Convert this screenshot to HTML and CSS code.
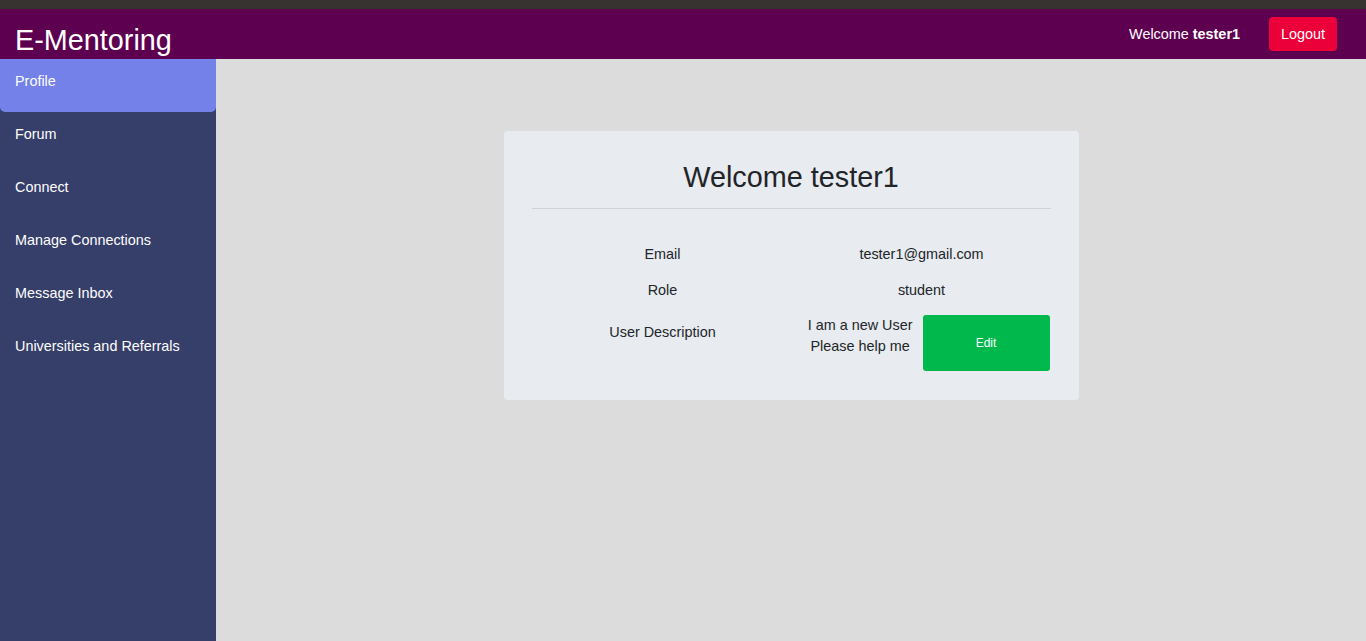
FILE: index.html
```html
<!DOCTYPE html>
<html lang="en">
<head>
<meta charset="utf-8">
<title>E-Mentoring</title>
<link rel="stylesheet" href="styles.css">
</head>
<body>
<div class="topstrip"></div>
<header class="header">
  <div class="brand">E-Mentoring</div>
  <div class="header-right">
    <span class="welcome">Welcome <b>tester1</b></span>
    <button class="logout">Logout</button>
  </div>
</header>
<div class="layout">
  <nav class="sidebar">
    <a class="nav-item active">Profile</a>
    <a class="nav-item">Forum</a>
    <a class="nav-item">Connect</a>
    <a class="nav-item">Manage Connections</a>
    <a class="nav-item">Message Inbox</a>
    <a class="nav-item">Universities and Referrals</a>
  </nav>
  <main class="main">
    <section class="card">
      <h2 class="card-title">Welcome tester1</h2>
      <hr class="divider">
      <div class="info">
        <div class="label">Email</div>
        <div class="value">tester1@gmail.com</div>
        <div class="label">Role</div>
        <div class="value">student</div>
        <div class="label label-desc">User Description</div>
        <div class="value value-desc">
          <span class="desc-text">I am a new User<br>Please help me</span>
          <button class="edit">Edit</button>
        </div>
      </div>
    </section>
  </main>
</div>
</body>
</html>
```
FILE: styles.css
```css
* { box-sizing: border-box; }
html, body { margin: 0; padding: 0; height: 100%; }
body {
  font-family: "Liberation Sans", Arial, sans-serif;
  background: #dcdcdc;
  color: #212529;
  display: flex;
  flex-direction: column;
  overflow: hidden;
}
.topstrip { height: 9px; background: #373331; flex: none; }
.header {
  height: 50px;
  flex: none;
  background: #5e0050;
  display: flex;
  justify-content: space-between;
  align-items: flex-start;
  padding: 0 29px 0 15px;
}
.brand {
  color: #fff;
  font-size: 28.8px;
  line-height: 33px;
  padding-top: 14.5px;
  white-space: nowrap;
}
.header-right {
  display: flex;
  align-items: center;
  height: 50px;
  gap: 29px;
  padding-top: 0;
}
.welcome { color: #fff; font-size: 14.4px; }
.welcome b { font-weight: bold; }
.logout {
  background: #ec0039;
  color: #fff;
  border: none;
  border-radius: 4px;
  font-family: inherit;
  font-size: 14.4px;
  height: 34px;
  padding: 0 12px;
  margin-top: 0;
}
.layout { flex: 1; display: flex; min-height: 0; }
.sidebar {
  width: 216px;
  flex: none;
  background: #363e6a;
  display: flex;
  flex-direction: column;
}
.nav-item {
  display: block;
  height: 53px;
  padding: 13px 15px 0;
  font-size: 14.4px;
  line-height: 18px;
  color: #fff;
  white-space: nowrap;
}
.nav-item.active {
  background: #7381e8;
  border-radius: 0 0 5px 5px;
}
.main {
  flex: 1;
  display: flex;
  justify-content: center;
  align-items: flex-start;
  padding-top: 72px;
}
.card {
  width: 575px;
  background: #e8ebef;
  border-radius: 4px;
  padding: 25px 28px 29px;
}
.card-title {
  margin: 0;
  text-align: center;
  font-weight: normal;
  font-size: 28.8px;
  line-height: 42px;
}
.divider {
  border: none;
  border-top: 1px solid #cfd2d6;
  margin: 10px 0 27px;
}
.info {
  display: grid;
  grid-template-columns: 262px 256px;
  font-size: 14.4px;
  line-height: 20px;
}
.label, .value { text-align: center; padding: 8px 0; }
.label-desc { padding-top: 14px; }
.value-desc {
  display: flex;
  justify-content: flex-end;
  align-items: flex-start;
  gap: 10px;
  padding: 7px 0 0;
  line-height: 21px;
}
.desc-text { text-align: center; padding-top: 0; }
.edit {
  width: 127px;
  height: 56px;
  background: #00b84c;
  color: #fff;
  border: none;
  border-radius: 3px;
  font-family: inherit;
  font-size: 12px;
}
```
